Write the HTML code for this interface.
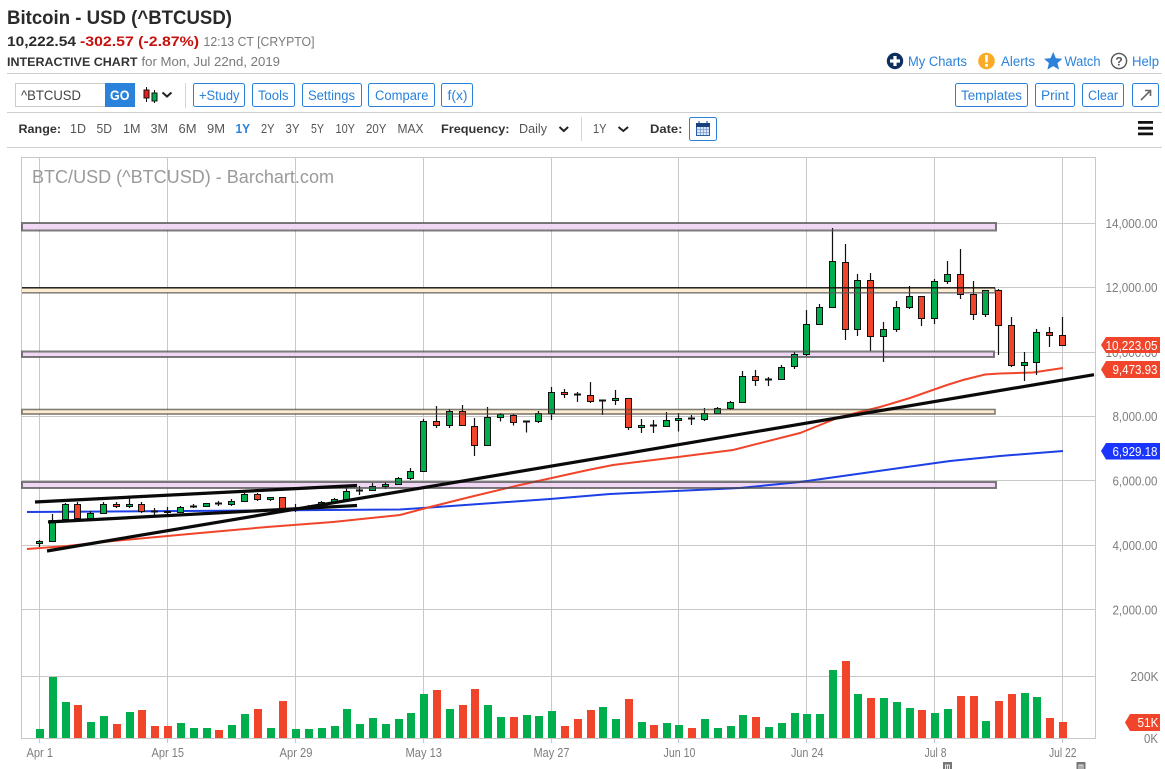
<!DOCTYPE html>
<html lang="en"><head><meta charset="utf-8"><title>Bitcoin - USD (^BTCUSD)</title>
<style>
html,body{margin:0;padding:0;background:#fff;width:1165px;height:769px;overflow:hidden}
svg{display:block}
text{font-family:"Liberation Sans",sans-serif}
.b{fill:#2a82db;font-size:13.5px}
.r{fill:#555;font-size:12.5px}
.l{fill:#333;font-size:12px;font-weight:700}
.y{fill:#7d7d7d;font-size:12.5px}
.d{fill:#7d7d7d;font-size:13px}
.t{fill:#fff;font-size:12.5px}
</style></head><body>
<svg width="1165" height="769" viewBox="0 0 1165 769" xmlns="http://www.w3.org/2000/svg">
<text x="7" y="24" font-size="19" font-weight="700" fill="#2a2a2a" textLength="225" lengthAdjust="spacingAndGlyphs">Bitcoin - USD (^BTCUSD)</text>
<text x="7" y="46" font-size="14" font-weight="700" fill="#2a2a2a" textLength="69" lengthAdjust="spacingAndGlyphs">10,222.54</text>
<text x="80" y="46" font-size="14" font-weight="700" fill="#c8100c" textLength="119" lengthAdjust="spacingAndGlyphs">-302.57 (-2.87%)</text>
<text x="203.5" y="46" font-size="13" fill="#7a7a7a" textLength="111" lengthAdjust="spacingAndGlyphs">12:13 CT [CRYPTO]</text>
<text x="7" y="66" font-size="12" font-weight="700" fill="#333" textLength="130.5" lengthAdjust="spacingAndGlyphs">INTERACTIVE CHART</text>
<text x="141.5" y="66" font-size="12.5" fill="#7a7a7a" textLength="138.5" lengthAdjust="spacingAndGlyphs">for Mon, Jul 22nd, 2019</text>

<path d="M7 73.5H1162M7 112.5H1162M7 147.5H1162" stroke="#cfcfcf" fill="none"/>
<path d="M185.5 83V108M581.5 117V141" stroke="#d5d5d5" fill="none"/>

<!-- top links -->
<circle cx="895" cy="61" r="8.2" fill="#0d2f5f"/>
<path d="M893.4 56h3.2v3.4h3.4v3.2h-3.4V66h-3.2v-3.4H890v-3.2h3.4z" fill="#fff"/>
<text x="908" y="66" class="b" textLength="59" lengthAdjust="spacingAndGlyphs">My Charts</text>
<circle cx="986.5" cy="61" r="8.3" fill="#f9ab25"/>
<path d="M985 55h3l-.4 7.5h-2.2zM985.1 64h2.8v2.7h-2.8z" fill="#fff"/>
<text x="1001" y="66" class="b" textLength="34" lengthAdjust="spacingAndGlyphs">Alerts</text>
<path d="M1053.2 52l2.7 6.2 6.5.5-4.9 4.3 1.5 6.6-5.8-3.5-5.8 3.5 1.5-6.6-4.9-4.3 6.5-.5z" fill="#2a82db"/>
<text x="1064.5" y="66" class="b" textLength="36" lengthAdjust="spacingAndGlyphs">Watch</text>
<circle cx="1119" cy="61" r="7.6" fill="none" stroke="#555" stroke-width="1.4"/>
<text x="1119" y="65.5" font-size="12" font-weight="700" fill="#555" text-anchor="middle">?</text>
<text x="1132" y="66" class="b" textLength="27" lengthAdjust="spacingAndGlyphs">Help</text>

<!-- toolbar -->
<rect x="15.5" y="83.5" width="90" height="23" fill="#fff" stroke="#ccc"/>
<text x="21" y="100" font-size="14" fill="#444" textLength="60" lengthAdjust="spacingAndGlyphs">^BTCUSD</text>
<rect x="105" y="83" width="30" height="24" fill="#2a82db"/>
<text x="110" y="100" font-size="13.5" font-weight="700" fill="#fff" textLength="19.5" lengthAdjust="spacingAndGlyphs">GO</text>
<path d="M146.5 87V102M154.5 90V103" stroke="#111" fill="none"/>
<rect x="144" y="90" width="5" height="8" fill="#ee1c1c" stroke="#111"/>
<rect x="152" y="93" width="5" height="8" fill="#00ae4d" stroke="#111"/>
<path d="M162.5 92.5l4.5 4 4.5-4" fill="none" stroke="#222" stroke-width="2"/>

<g fill="#fff" stroke="#2a82db">
<rect x="193.5" y="83.5" width="51" height="23" rx="2"/>
<rect x="252.5" y="83.5" width="42" height="23" rx="2"/>
<rect x="302.5" y="83.5" width="59" height="23" rx="2"/>
<rect x="368.5" y="83.5" width="66" height="23" rx="2"/>
<rect x="441.5" y="83.5" width="31" height="23" rx="2"/>
<rect x="955.5" y="83.5" width="72" height="23" rx="2"/>
<rect x="1035.5" y="83.5" width="39" height="23" rx="2"/>
<rect x="1082.5" y="83.5" width="41" height="23" rx="2"/>
<rect x="1132.5" y="83.5" width="26" height="23" rx="2"/>
</g>
<text x="199" y="100" class="b" textLength="40.5" lengthAdjust="spacingAndGlyphs">+Study</text>
<text x="258" y="100" class="b" textLength="30.5" lengthAdjust="spacingAndGlyphs">Tools</text>
<text x="308" y="100" class="b" textLength="47" lengthAdjust="spacingAndGlyphs">Settings</text>
<text x="375" y="100" class="b" textLength="53.5" lengthAdjust="spacingAndGlyphs">Compare</text>
<text x="447.5" y="100" class="b" textLength="20" lengthAdjust="spacingAndGlyphs">f(x)</text>
<text x="961" y="100" class="b" textLength="61" lengthAdjust="spacingAndGlyphs">Templates</text>
<text x="1041" y="100" class="b" textLength="28" lengthAdjust="spacingAndGlyphs">Print</text>
<text x="1088" y="100" class="b" textLength="30" lengthAdjust="spacingAndGlyphs">Clear</text>
<path d="M1141 100L1150 91M1145 90.5h5.5v5.5" fill="none" stroke="#666" stroke-width="1.6"/>

<!-- range row -->
<text x="18.5" y="133" class="l" textLength="42.5" lengthAdjust="spacingAndGlyphs">Range:</text>
<text x="70" y="133" class="r" textLength="16" lengthAdjust="spacingAndGlyphs">1D</text>
<text x="96.5" y="133" class="r" textLength="15.5" lengthAdjust="spacingAndGlyphs">5D</text>
<text x="123" y="133" class="r" textLength="17.5" lengthAdjust="spacingAndGlyphs">1M</text>
<text x="150.5" y="133" class="r" textLength="17.5" lengthAdjust="spacingAndGlyphs">3M</text>
<text x="178.5" y="133" class="r" textLength="18" lengthAdjust="spacingAndGlyphs">6M</text>
<text x="207" y="133" class="r" textLength="18" lengthAdjust="spacingAndGlyphs">9M</text>
<text x="235.5" y="133" font-size="12.5" font-weight="700" fill="#2a82db" textLength="14.5" lengthAdjust="spacingAndGlyphs">1Y</text>
<text x="261" y="133" class="r" textLength="13.5" lengthAdjust="spacingAndGlyphs">2Y</text>
<text x="285.5" y="133" class="r" textLength="14" lengthAdjust="spacingAndGlyphs">3Y</text>
<text x="311" y="133" class="r" textLength="13" lengthAdjust="spacingAndGlyphs">5Y</text>
<text x="335.5" y="133" class="r" textLength="19.5" lengthAdjust="spacingAndGlyphs">10Y</text>
<text x="366" y="133" class="r" textLength="20.5" lengthAdjust="spacingAndGlyphs">20Y</text>
<text x="397.5" y="133" class="r" textLength="26" lengthAdjust="spacingAndGlyphs">MAX</text>
<text x="441" y="133" class="l" textLength="68.5" lengthAdjust="spacingAndGlyphs">Frequency:</text>
<text x="519" y="133" class="r" textLength="28" lengthAdjust="spacingAndGlyphs">Daily</text>
<path d="M559.5 127l4.3 4 4.3-4" fill="none" stroke="#222" stroke-width="2"/>
<text x="593" y="133" class="r" textLength="13.5" lengthAdjust="spacingAndGlyphs">1Y</text>
<path d="M618.5 127l4.8 4 4.8-4" fill="none" stroke="#222" stroke-width="2"/>
<text x="650" y="133" class="l" textLength="32.5" lengthAdjust="spacingAndGlyphs">Date:</text>
<rect x="689.5" y="117.5" width="27" height="23" rx="2" fill="#fff" stroke="#2a82db"/>
<rect x="696.5" y="123.5" width="13" height="12" fill="#dbe7f6" stroke="#2a5ea8"/>
<path d="M696.5 123.5h13v3h-13zM699 121v3M707 121v3" fill="#17427e" stroke="#17427e"/>
<path d="M700.5 127V135M703.5 127V135M706.5 127V135M697 129.5H709M697 132.5H709" stroke="#7d9fd0" stroke-width=".8" fill="none"/>
<path d="M1138 121h15v2.8h-15zM1138 126.8h15v2.8h-15zM1138 132.5h15v2.8h-15z" fill="#111"/>

<!-- grid -->
<path d="M21.5 223.5H1095M21.5 287.5H1095M21.5 352.5H1095M21.5 416.5H1095M21.5 480.5H1095M21.5 545.5H1095M21.5 609.5H1095M21.5 676.5H1095" stroke="#c8c8c8" fill="none"/>
<path d="M39.5 158V743M167.5 158V743M295.5 158V743M423.5 158V743M551.5 158V743M678.5 158V743M806.5 158V743M934.5 158V743M1062.5 158V743" stroke="#c8c8c8" fill="none"/>
<rect x="21.5" y="157.5" width="1074" height="581" fill="none" stroke="#c8c8c8"/>
<text x="32" y="183" font-size="18" fill="#9a9a9a" textLength="302" lengthAdjust="spacingAndGlyphs">BTC/USD (^BTCUSD) - Barchart.com</text>

<!-- band fills -->
<g fill-opacity=".92">
<rect x="22" y="223" width="974" height="7" fill="#efd5f3"/>
<rect x="22" y="288" width="973" height="5" fill="#fdeccf"/>
<rect x="22" y="352" width="972" height="5" fill="#efd5f3"/>
<rect x="22" y="410" width="973" height="4" fill="#fdeccf"/>
<rect x="22" y="482" width="974" height="6" fill="#efd5f3"/>
</g>

<!-- volume -->
<path fill="#00ae4d" d="M36 729h8V738h-8zM49 677h8V738h-8zM62 702h8V738h-8zM87 722h8V738h-8zM100 716h8V738h-8zM126 712h8V738h-8zM177 723h8V738h-8zM190 728h8V738h-8zM203 728h8V738h-8zM228 725h8V738h-8zM241 714h8V738h-8zM267 728h8V738h-8zM292 729h8V738h-8zM305 729h8V738h-8zM318 728h8V738h-8zM331 726h8V738h-8zM343 709h8V738h-8zM356 724h8V738h-8zM369 718h8V738h-8zM382 724h8V738h-8zM395 719h8V738h-8zM407 713h8V738h-8zM420 694h8V738h-8zM446 709h8V738h-8zM484 705h8V738h-8zM497 717h8V738h-8zM523 715h8V738h-8zM535 716h8V738h-8zM548 711h8V738h-8zM599 707h8V738h-8zM612 719h8V738h-8zM638 722h8V738h-8zM663 723h8V738h-8zM675 725h8V738h-8zM701 719h8V738h-8zM714 728h8V738h-8zM727 726h8V738h-8zM739 715h8V738h-8zM765 727h8V738h-8zM778 723h8V738h-8zM791 713h8V738h-8zM803 714h8V738h-8zM816 714h8V738h-8zM829 670h8V738h-8zM854 694h8V738h-8zM880 698h8V738h-8zM893 702h8V738h-8zM906 708h8V738h-8zM931 713h8V738h-8zM944 709h8V738h-8zM982 721h8V738h-8zM1021 693h8V738h-8zM1033 697h8V738h-8z"/>
<path fill="#f0452a" d="M74 705h8V738h-8zM113 724h8V738h-8zM138 710h8V738h-8zM151 726h8V738h-8zM164 726h8V738h-8zM215 730h8V738h-8zM254 709h8V738h-8zM279 701h8V738h-8zM433 690h8V738h-8zM459 705h8V738h-8zM471 689h8V738h-8zM510 717h8V738h-8zM561 726h8V738h-8zM574 719h8V738h-8zM587 710h8V738h-8zM625 699h8V738h-8zM650 725h8V738h-8zM688 728h8V738h-8zM752 717h8V738h-8zM842 661h8V738h-8zM867 698h8V738h-8zM918 710h8V738h-8zM957 696h8V738h-8zM970 696h8V738h-8zM995 701h8V738h-8zM1008 694h8V738h-8zM1046 718h8V738h-8zM1059 722h8V738h-8z"/>

<!-- MAs -->
<path d="M27 512L400 509.5L430 507.5L550 499L610 494L740 488L800 482L850 475L950 461L1000 456L1063 451" fill="none" stroke="#1c3fe6" stroke-width="2"/>
<path d="M27 549L67 546L113 541L200 533L267 527L333 522L400 515L430 507L470 497L520 485L588 470L613 465L678 457L733 450L800 433L820 425L840 417L880 407L910 398L947 385L963 380L985 374.5L1000 373.5L1033 372.5L1063 368" fill="none" stroke="#f0452a" stroke-width="2"/>

<!-- wicks -->
<path fill="none" stroke="#111" stroke-width="1.2" d="M39.5 540V547M52.5 514V542M65.5 503V520M77.5 502V519M90.5 511V519M103.5 502V514M116.5 502V508M129.5 498V508M141.5 502V513M154.5 508V515M167.5 507V515M180.5 506V513M193.5 504V508M206.5 503V507M218.5 501V506M231.5 499V506M244.5 493V502M257.5 493V501M270.5 497V501M282.5 497V509M295.5 504V512M308.5 505V509M321.5 501V505M334.5 498V503M346.5 487V500M359.5 486V495M372.5 483V491M385.5 482V489M398.5 477V485M410.5 468V480M423.5 419V472M436.5 406V428M449.5 409V428M462.5 405V426M474.5 418V456M487.5 407V446M500.5 413V421.5M513.5 414V425.5M526.5 421V432.5M538.5 411V423M551.5 387V420M564.5 389V398M577.5 392V402M590.5 382V403M602.5 401V415M615.5 390V405M628.5 398V430M641.5 419V433M653.5 420V433M666.5 412V427M678.5 413V431.5M691.5 415V425M704.5 408V421M717.5 407V414M730.5 401V410M742.5 371V403M755.5 370V386M768.5 377V386M781.5 365V380M794.5 352V369M806.5 310V356M819.5 304V325M832.5 228V308M845.5 244V340M857.5 274V336M870.5 273V351M883.5 322V362M896.5 301V332M909.5 286V309M921.5 296V326M934.5 279V324M947.5 261V284M960.5 249V299M973.5 281V320M985.5 290V317M998.5 289V355M1011.5 317V367M1024.5 352V381M1036.5 329V375M1049.5 327V347M1062.5 317V345"/>
<!-- dojis -->
<path fill="none" stroke="#111" stroke-width="2" d="M151 511.5h7M164 512h7M190 506.5h7M215 503.5h7M292 508.5h7M356 490.5h7M523 421.5h7M574 394.5h7M599 400.5h7M650 425.5h7M688 418.5h7M765 379.5h7"/>
<!-- green bodies -->
<path fill="#00ae4d" stroke="#111" d="M36.5 541.5h6V543.5h-6zM49.5 520.5h6V541.5h-6zM62.5 504.500h6V519.5h-6zM87.5 513.5h6V518.5h-6zM100.5 504.5h6V513.5h-6zM126.5 504.5h6V506.5h-6zM177.5 507.5h6V512.5h-6zM203.5 503.5h6V506.5h-6zM228.5 501.5h6V504.5h-6zM241.5 494.5h6V501.5h-6zM267.5 497.5h6V499.5h-6zM305.5 506.5h6V508.5h-6zM318.5 502.5h6V504.5h-6zM331.5 499.5h6V502.5h-6zM343.5 491.5h6V499.5h-6zM369.5 486.5h6V490.5h-6zM382.5 484.5h6V486.5h-6zM395.5 478.5h6V484.5h-6zM407.5 471.5h6V478.5h-6zM420.5 421.5h6V471.5h-6zM446.5 411.5h6V425.5h-6zM484.5 417.5h6V445.5h-6zM497.5 414.5h6V417.5h-6zM535.5 413.5h6V421.5h-6zM548.5 392.5h6V413.5h-6zM612.5 398.5h6V400.5h-6zM638.5 425.5h6V427.5h-6zM663.5 420.5h6V426.5h-6zM675.5 418.5h6V420.5h-6zM701.5 413.5h6V419.5h-6zM714.5 408.5h6V413.5h-6zM727.5 402.5h6V408.5h-6zM739.5 376.5h6V402.5h-6zM778.5 367.5h6V379.5h-6zM791.5 354.5h6V366.5h-6zM803.5 324.5h6V354.5h-6zM816.5 307.5h6V324.5h-6zM829.5 261.5h6V307.5h-6zM854.5 280.5h6V329.5h-6zM880.5 329.5h6V336.5h-6zM893.5 307.5h6V329.5h-6zM906.5 296.5h6V307.5h-6zM931.5 281.5h6V318.5h-6zM944.5 274.5h6V281.5h-6zM982.5 290.5h6V314.5h-6zM1021.5 362.5h6V365.5h-6zM1033.5 332.5h6V362.5h-6z"/>
<!-- red bodies -->
<path fill="#f0452a" stroke="#111" d="M74.5 504.5h6V518.5h-6zM113.5 504.5h6V506.5h-6zM138.5 504.5h6V511.5h-6zM254.5 494.5h6V499.5h-6zM279.5 497.5h6V508.5h-6zM433.5 421.5h6V425.5h-6zM459.5 411.5h6V425.5h-6zM471.5 426.5h6V445.5h-6zM510.5 415.5h6V422.5h-6zM561.5 392.5h6V394.5h-6zM587.5 395.5h6V401.5h-6zM625.5 398.5h6V427.5h-6zM752.5 376.5h6V380.5h-6zM842.5 262.5h6V329.5h-6zM867.5 280.5h6V336.5h-6zM918.5 296.5h6V318.5h-6zM957.5 274.5h6V294.5h-6zM970.5 294.5h6V314.5h-6zM995.5 290.5h6V325.5h-6zM1008.5 325.5h6V365.5h-6zM1046.5 332.5h6V335.5h-6zM1059.5 335.5h6V345.5h-6z"/>

<!-- band strokes -->
<g fill="none" stroke-opacity=".72">
<rect x="22" y="223" width="974" height="7.5" stroke="#4a4a4a" stroke-width="2"/>
<rect x="22" y="351.5" width="972" height="5.5" stroke="#4a4a4a" stroke-width="2"/>
<rect x="22" y="482" width="974" height="6" stroke="#4a4a4a" stroke-width="2"/>
<rect x="22" y="409.5" width="973" height="4.5" stroke="#4f4a40" stroke-width="1.6"/>
<path d="M22 292.8H995V288" stroke="#5a5a5a" stroke-width="1.6"/>
</g>
<path d="M22 287.8H995" stroke="#111" stroke-width="1.4"/>

<!-- trend lines -->
<g stroke="#0a0a0a" stroke-width="3.2" fill="none">
<path d="M35 502L357 485.5"/>
<path d="M48 522L357 505.5"/>
<path d="M47 551L1094 374.7"/>
</g>

<!-- axis labels -->
<text x="1105.5" y="228" class="y" textLength="52" lengthAdjust="spacingAndGlyphs">14,000.00</text>
<text x="1105.5" y="292" class="y" textLength="52" lengthAdjust="spacingAndGlyphs">12,000.00</text>
<text x="1105.5" y="357" class="y" textLength="52" lengthAdjust="spacingAndGlyphs">10,000.00</text>
<text x="1112.5" y="421" class="y" textLength="45" lengthAdjust="spacingAndGlyphs">8,000.00</text>
<text x="1112.5" y="485.5" class="y" textLength="45" lengthAdjust="spacingAndGlyphs">6,000.00</text>
<text x="1112.5" y="550" class="y" textLength="45" lengthAdjust="spacingAndGlyphs">4,000.00</text>
<text x="1112.5" y="614.5" class="y" textLength="45" lengthAdjust="spacingAndGlyphs">2,000.00</text>
<text x="1130.5" y="681" class="y" textLength="28" lengthAdjust="spacingAndGlyphs">200K</text>
<text x="1144" y="743" class="y" textLength="14" lengthAdjust="spacingAndGlyphs">0K</text>

<path d="M1101 345L1106 337H1160V353H1106Z" fill="#f0452a"/>
<text x="1105.5" y="350" class="t" textLength="52" lengthAdjust="spacingAndGlyphs">10,223.05</text>
<path d="M1101 369.5L1106 361H1160V378H1106Z" fill="#f0452a"/>
<text x="1112.5" y="374" class="t" textLength="45" lengthAdjust="spacingAndGlyphs">9,473.93</text>
<path d="M1101 451L1106 443H1160V459.5H1106Z" fill="#1a35ff"/>
<text x="1112.5" y="456" class="t" textLength="45" lengthAdjust="spacingAndGlyphs">6,929.18</text>
<path d="M1125 722.5L1130 714H1160V731H1130Z" fill="#f0452a"/>
<text x="1137.5" y="727" class="t" textLength="21" lengthAdjust="spacingAndGlyphs">51K</text>

<!-- date labels -->
<text x="26.5" y="757" class="d" textLength="26.5" lengthAdjust="spacingAndGlyphs">Apr 1</text>
<text x="151.5" y="757" class="d" textLength="32.5" lengthAdjust="spacingAndGlyphs">Apr 15</text>
<text x="279.5" y="757" class="d" textLength="33" lengthAdjust="spacingAndGlyphs">Apr 29</text>
<text x="405.5" y="757" class="d" textLength="36.5" lengthAdjust="spacingAndGlyphs">May 13</text>
<text x="533.5" y="757" class="d" textLength="36" lengthAdjust="spacingAndGlyphs">May 27</text>
<text x="663.5" y="757" class="d" textLength="32" lengthAdjust="spacingAndGlyphs">Jun 10</text>
<text x="791" y="757" class="d" textLength="32.5" lengthAdjust="spacingAndGlyphs">Jun 24</text>
<text x="924.5" y="757" class="d" textLength="22" lengthAdjust="spacingAndGlyphs">Jul 8</text>
<text x="1049" y="757" class="d" textLength="27.5" lengthAdjust="spacingAndGlyphs">Jul 22</text>

<!-- markers -->
<rect x="943" y="762" width="9" height="7" fill="#777"/>
<rect x="1076.5" y="762" width="9" height="7" fill="#777"/>
<path d="M945.5 769V765h4v4M947.5 765v4M1079 769V765h4v4M1081 765v4" stroke="#fff" stroke-width=".8" fill="none"/>
</svg>
</body></html>
